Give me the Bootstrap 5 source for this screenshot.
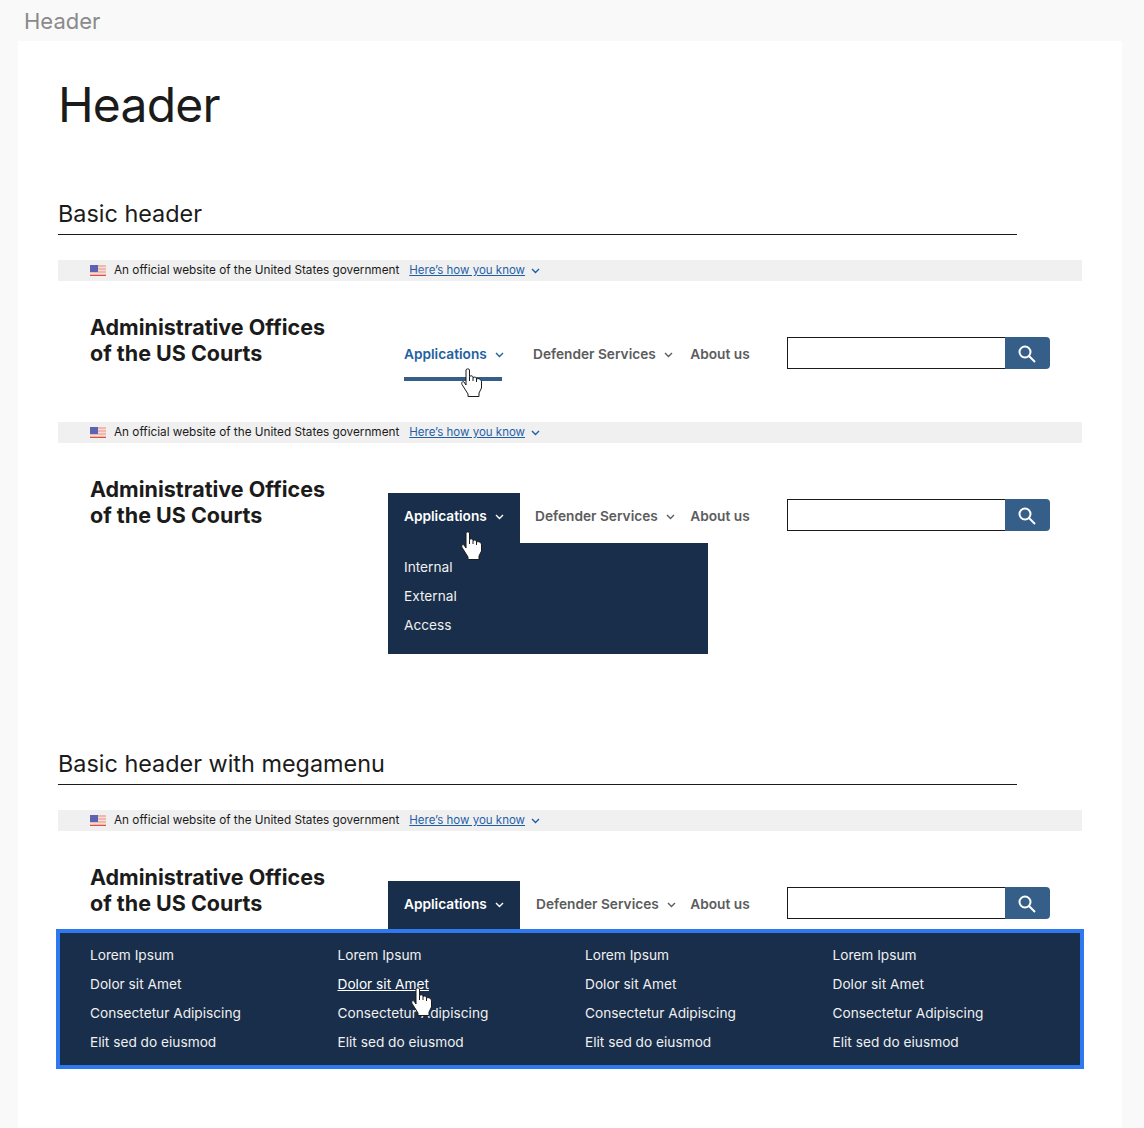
<!DOCTYPE html>
<html lang="en">
<head>
  <meta charset="UTF-8" />
  <meta name="viewport" content="width=device-width, initial-scale=1.0" />
  <title>Header</title>
  <link href="https://cdn.jsdelivr.net/npm/bootstrap@5.3.0/dist/css/bootstrap.min.css" rel="stylesheet" />
  <style>
    html, body { height: 1128px; overflow: hidden; }
    body { background: #f9f9f9; font-family: "Inter", "Liberation Sans", sans-serif; color: #1b1b1b; }
    .page-label { height: 41px; padding: 7px 0 0 24px; font-size: 22px; line-height: 28px; color: #8a8a8a; }
    .sheet { margin: 0 22px 0 18px; height: 1087px; background: #fff; padding: 0 40px; }
    .sheet-title { font-size: 48px; letter-spacing: -.8px; font-weight: 400; line-height: 60px; margin: 0; padding: 34px 0 0 0; height: 135px; }
    .sect-title { width: 959px; height: 59px; margin: 0; padding-top: 23px; font-size: 23.4px; line-height: 29px; font-weight: 400; border-bottom: 1px solid #1b1b1b; }
    .sect-gap { margin-top: 183px; }
    .gov-strip { width: 1024px; height: 21px; margin-top: 25px; padding-left: 32px; background: #f0f0f0; font-size: 11.75px; line-height: 21px; }
    .gov-strip.again { margin-top: 0; }
    .gov-strip a { color: #1f5fa8; margin-left: 10px; font-size: 11.5px; }
    .gov-strip .flag { margin-right: 8px; }
    .gov-strip .chev { margin-left: 6px; stroke: #1f5fa8; }
    .chev { width: 9px; height: 6px; fill: none; stroke-width: 1.4; }
    .site-head { width: 1024px; height: 141px; padding: 0 32px; align-items: flex-start; }
    .site-head.short { height: 100px; }
    .site-head.mega { height: 98px; }
    .org-name { width: 314px; margin-top: 33px; font-size: 21.5px; line-height: 26px; font-weight: 700; flex: none; }
    .head-nav { margin-top: 50px; flex-wrap: nowrap; }
    .head-nav .nav-link { height: 50px; padding: 13px 0 0; font-size: 13.7px; line-height: 20px; font-weight: 600; color: #5c5c5c; white-space: nowrap; }
    .head-nav .chev { margin-left: 5px; stroke: currentColor; vertical-align: 1px; }
    .head-nav .nav-link.hovered { color: #23609f; border-bottom: 4px solid #355e88; width: 98px; }
    .head-nav .nav-link.opened { background: #192e4a; color: #fff; width: 132px; margin-left: -16px; padding-left: 16px; }
    .search-box { width: 263px; margin-top: 56px; margin-left: auto; flex: none; }
    .search-box .form-control { height: 32px; padding: 0 8px; border: 1px solid #1b1b1b; border-radius: 0; }
    .search-box .btn { width: 45px; height: 32px; padding: 0; background: #355e88; border: 0; border-radius: 0 4px 4px 0; }
    .drop-panel.dropdown-menu { top: 50px; left: -16px; width: 320px; height: 111px; padding: 10px 0 0; margin: 0; background: #192e4a; border: 0; border-radius: 0; }
    .drop-panel .dropdown-item, .mega-panel a { padding: 0 0 0 16px; font-size: 13.7px; line-height: 29px; color: #f0f0f0; background: none; }
    .mega-panel { width: 1028px; height: 140px; margin-left: -2px; border: 4px solid #2e78f0; background: #192e4a; padding: 8px 0 0 30px; position: relative; }
    .mega-panel .row { --bs-gutter-x: 0; width: 990px; }
    .mega-panel a { display: block; width: fit-content; padding: 0; text-decoration: none; }
    .mega-panel a.under { text-decoration: underline; color: #fff; }
    .hand { position: absolute; left: 57px; top: 37px; width: 21px; height: 29px; z-index: 1001; fill: #fff; stroke: #1b1b1b; stroke-width: 1; stroke-linejoin: round; }
    .hand.over-tab { left: 57px; top: 38px; }
    .hand.over-mega { left: 351px; top: 54px; }
    .ms-def-a { margin-left: 31px; } .ms-abt-a { margin-left: 17px; }
    .ms-def-b { margin-left: 15px; } .ms-abt-b { margin-left: 15px; }
    .ms-def-c { margin-left: 16px; } .ms-abt-c { margin-left: 14px; }
  </style>
</head>
<body>
  <svg class="d-none">
    <symbol id="flagus" viewBox="0 0 16 11">
      <rect width="16" height="11" fill="#f0b9b0" />
      <rect y="2" width="16" height="1" fill="#f6dcd8" />
      <rect y="5" width="16" height="1" fill="#f6dcd8" />
      <rect y="8" width="16" height="1" fill="#f6dcd8" />
      <rect y="10" width="16" height="1" fill="#d8523f" />
      <rect width="8" height="7" fill="#5c63b0" />
    </symbol>
    <symbol id="chevdown" viewBox="0 0 9 6">
      <path d="M1 1l3.5 3.5L8 1" />
    </symbol>
    <symbol id="handptr" viewBox="0 0 21 29">
      <path d="M7 28.5V26L1 16.5C0 14 2 13 3 14L5 17V2C5 .5 8.5 .5 8.5 2V8.5C10.5 7 12 8 12 9.5 14 8.5 15.5 9.5 15.5 11 18 10 20.5 11.5 20.5 14V20L18 25V28.5Z" />
      <path d="M8.5 8.5V13M12 9.5V13M15.5 11V14" fill="none" />
    </symbol>
    <symbol id="searchglass" viewBox="1 1 20 20">
      <circle cx="8" cy="8" r="5.5" />
      <path d="M12 12l6 6" />
    </symbol>
  </svg>

  <div class="page-label">Header</div>
  <div class="sheet">
    <h1 class="sheet-title">Header</h1>

    <h2 class="sect-title">Basic header</h2>

    <div class="gov-strip d-flex align-items-center">
      <svg class="flag" width="16" height="11"><use href="#flagus" /></svg>
      <span>An official website of the United States government</span>
      <a href="#">Here’s how you know</a>
      <svg class="chev"><use href="#chevdown" /></svg>
    </div>
    <header class="site-head d-flex">
      <div class="org-name">Administrative Offices<br />of the US Courts</div>
      <ul class="nav head-nav">
        <li class="nav-item position-relative">
          <a class="nav-link hovered" href="#">Applications <svg class="chev"><use href="#chevdown" /></svg></a>
          <svg class="hand"><use href="#handptr" /></svg>
        </li>
        <li class="nav-item ms-def-a"><a class="nav-link" href="#">Defender Services <svg class="chev"><use href="#chevdown" /></svg></a></li>
        <li class="nav-item ms-abt-a"><a class="nav-link" href="#">About us</a></li>
      </ul>
      <form class="input-group search-box flex-nowrap">
        <input class="form-control" type="text" aria-label="Search" />
        <button class="btn" type="button" aria-label="Search">
          <svg width="20" height="20" fill="none" stroke="#fff" stroke-width="2"><use href="#searchglass" /></svg>
        </button>
      </form>
    </header>

    <div class="gov-strip again d-flex align-items-center">
      <svg class="flag" width="16" height="11"><use href="#flagus" /></svg>
      <span>An official website of the United States government</span>
      <a href="#">Here’s how you know</a>
      <svg class="chev"><use href="#chevdown" /></svg>
    </div>
    <header class="site-head short d-flex">
      <div class="org-name">Administrative Offices<br />of the US Courts</div>
      <ul class="nav head-nav">
        <li class="nav-item dropdown position-relative">
          <a class="nav-link opened" href="#">Applications <svg class="chev"><use href="#chevdown" /></svg></a>
          <svg class="hand over-tab"><use href="#handptr" /></svg>
          <div class="dropdown-menu drop-panel show">
            <a class="dropdown-item" href="#">Internal</a>
            <a class="dropdown-item" href="#">External</a>
            <a class="dropdown-item" href="#">Access</a>
          </div>
        </li>
        <li class="nav-item ms-def-b"><a class="nav-link" href="#">Defender Services <svg class="chev"><use href="#chevdown" /></svg></a></li>
        <li class="nav-item ms-abt-b"><a class="nav-link" href="#">About us</a></li>
      </ul>
      <form class="input-group search-box flex-nowrap">
        <input class="form-control" type="text" aria-label="Search" />
        <button class="btn" type="button" aria-label="Search">
          <svg width="20" height="20" fill="none" stroke="#fff" stroke-width="2"><use href="#searchglass" /></svg>
        </button>
      </form>
    </header>

    <h2 class="sect-title sect-gap">Basic header with megamenu</h2>

    <div class="gov-strip d-flex align-items-center">
      <svg class="flag" width="16" height="11"><use href="#flagus" /></svg>
      <span>An official website of the United States government</span>
      <a href="#">Here’s how you know</a>
      <svg class="chev"><use href="#chevdown" /></svg>
    </div>
    <header class="site-head mega d-flex">
      <div class="org-name">Administrative Offices<br />of the US Courts</div>
      <ul class="nav head-nav">
        <li class="nav-item"><a class="nav-link opened" href="#">Applications <svg class="chev"><use href="#chevdown" /></svg></a></li>
        <li class="nav-item ms-def-c"><a class="nav-link" href="#">Defender Services <svg class="chev"><use href="#chevdown" /></svg></a></li>
        <li class="nav-item ms-abt-c"><a class="nav-link" href="#">About us</a></li>
      </ul>
      <form class="input-group search-box flex-nowrap">
        <input class="form-control" type="text" aria-label="Search" />
        <button class="btn" type="button" aria-label="Search">
          <svg width="20" height="20" fill="none" stroke="#fff" stroke-width="2"><use href="#searchglass" /></svg>
        </button>
      </form>
    </header>
    <div class="mega-panel">
      <div class="row">
        <div class="col-3">
          <a href="#">Lorem Ipsum</a><a href="#">Dolor sit Amet</a><a href="#">Consectetur Adipiscing</a><a href="#">Elit sed do eiusmod</a>
        </div>
        <div class="col-3">
          <a href="#">Lorem Ipsum</a><a class="under" href="#">Dolor sit Amet</a><a href="#">Consectetur Adipiscing</a><a href="#">Elit sed do eiusmod</a>
        </div>
        <div class="col-3">
          <a href="#">Lorem Ipsum</a><a href="#">Dolor sit Amet</a><a href="#">Consectetur Adipiscing</a><a href="#">Elit sed do eiusmod</a>
        </div>
        <div class="col-3">
          <a href="#">Lorem Ipsum</a><a href="#">Dolor sit Amet</a><a href="#">Consectetur Adipiscing</a><a href="#">Elit sed do eiusmod</a>
        </div>
      </div>
      <svg class="hand over-mega"><use href="#handptr" /></svg>
    </div>
  </div>
</body>
</html>
